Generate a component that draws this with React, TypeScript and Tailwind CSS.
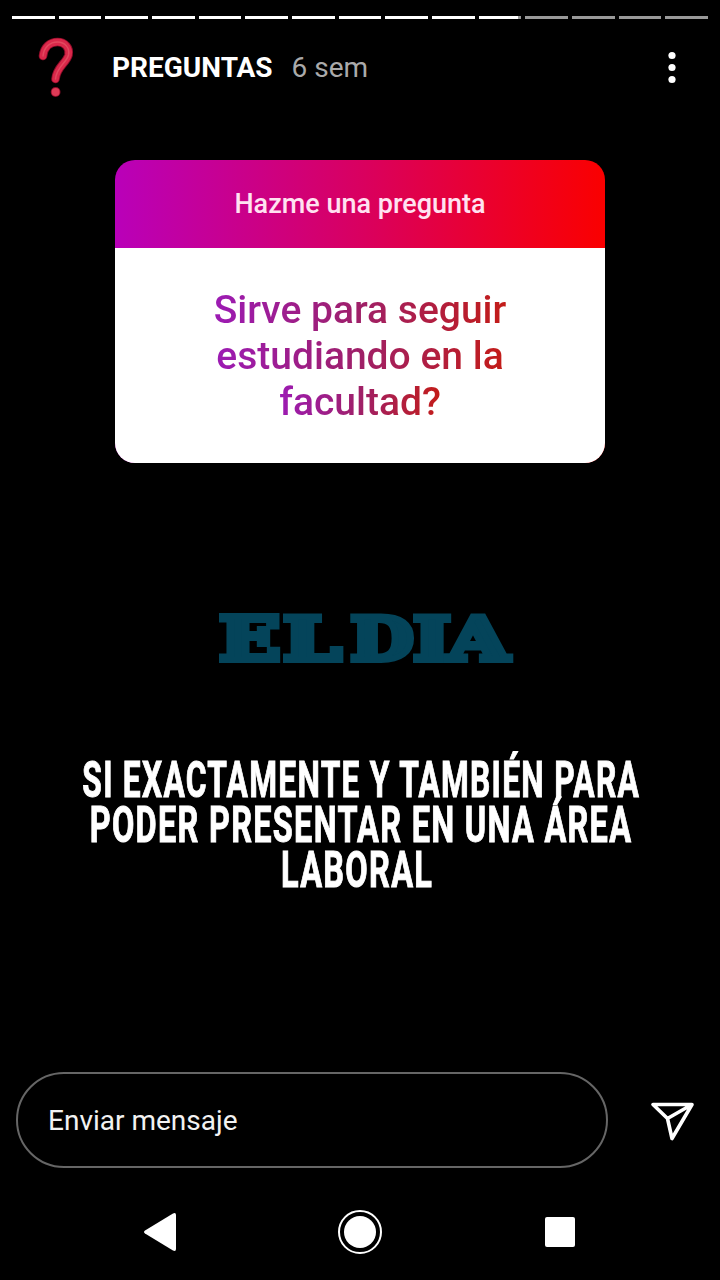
const SEGMENTS = ['full', 'full', 'full', 'full', 'full', 'full', 'full', 'full', 'full', 'full', 'current', 'empty', 'empty', 'empty', 'empty'];

function ProgressBar() {
  return (
    <div className="flex h-[3px] gap-1 px-3 mt-4">
      {SEGMENTS.map((state, i) => (
        <div key={i} className="h-full flex-1 bg-[#999999]">
          {state !== 'empty' && (
            <div className={state === 'full' ? 'h-full w-full bg-white' : 'h-full w-[91%] bg-white'} />
          )}
        </div>
      ))}
    </div>
  );
}

function QuestionMark() {
  return (
    <svg className="h-[75px] w-[60px]" viewBox="0 0 60 75" fill="none">
      <path d="M18 26C19 17 25 12 32.500 12C40 12 45 18 43.500 25C41.500 33 31.500 37 30.500 49" stroke="#8f0c29" strokeWidth="8.600" strokeLinecap="round" />
      <path d="M18 26C19 17 25 12 32.500 12C40 12 45 18 43.500 25C41.500 33 31.500 37 30.500 49" stroke="#d9284a" strokeWidth="6.800" strokeLinecap="round" />
      <path d="M18 26C19 17 25 12 32.500 12C40 12 45 18 43.500 25C41.500 33 31.500 37 30.500 49" stroke="#e2495f" strokeWidth="1.500" strokeLinecap="round" />
      <circle cx="30.600" cy="62" r="4.900" fill="#8f0c29" />
      <circle cx="30.600" cy="62" r="4" fill="#de3b57" />
    </svg>
  );
}

function Header() {
  return (
    <header className="flex h-[75px] items-center mt-[11px] pl-[25px] pr-[40px]">
      <QuestionMark />
      <span className="ml-[27px] pt-px text-[28px] font-bold text-white">PREGUNTAS</span>
      <span className="ml-[19px] pt-px text-[28px] text-[#aaaaaa]">6 sem</span>
      <svg className="ml-auto h-9 w-4" viewBox="0 0 16 36" fill="white">
        <circle cx="8" cy="5.500" r="3.600" />
        <circle cx="8" cy="17.500" r="3.600" />
        <circle cx="8" cy="29.500" r="3.600" />
      </svg>
    </header>
  );
}

function QuestionCard() {
  return (
    <section className="mx-auto mt-[55px] flex h-[303px] w-[490px] flex-col overflow-hidden rounded-[20px] bg-linear-to-r/srgb from-[#b900b9] via-[#d90060] to-[#fa0000]">
      <div className="flex h-[88px] items-center justify-center text-[27px] font-medium text-[#ffe2f1]">
        Hazme una pregunta
      </div>
      <div className="flex flex-1 flex-col items-center bg-white pt-[39px] text-[39px] leading-[46px] font-medium text-transparent">
        <span className="bg-linear-to-r/srgb from-[#9c1bb4] via-[#9f2068] to-[#c31c18] bg-clip-text">Sirve para seguir</span>
        <span className="bg-linear-to-r/srgb from-[#9c1bb4] via-[#9f2068] to-[#c31c18] bg-clip-text">estudiando en la</span>
        <span className="bg-linear-to-r/srgb from-[#9c1bb4] via-[#9f2068] to-[#c31c18] bg-clip-text">facultad?</span>
      </div>
    </section>
  );
}

function Brand() {
  return (
    <div className="ml-[219px] mt-[151px] flex h-[50px] w-[294px] items-center font-['DejaVu_Serif'] text-[60px] leading-[50px] font-bold text-[#04445a] [-webkit-text-stroke:6px_#04445a]">
      <span className="flex w-[61px] shrink-0 justify-center"><span className="scale-x-[1.335]">E</span></span>
      <span className="ml-[2px] flex w-[61px] shrink-0 justify-center"><span className="scale-x-[1.370]">L</span></span>
      <span className="ml-[7px] flex w-[64px] shrink-0 justify-center"><span className="scale-x-[1.210]">D</span></span>
      <span className="-ml-px flex w-[39px] shrink-0 justify-center"><span className="scale-x-[1.340]">I</span></span>
      <span className="-ml-[7px] flex w-[67px] shrink-0 justify-center"><span className="scale-x-[1.300]">A</span></span>
    </div>
  );
}

function Answer() {
  return (
    <div className="mt-[94px] flex flex-col items-center pl-[2px] text-[50px] leading-[45px] font-bold tracking-[2px] whitespace-nowrap text-white [-webkit-text-stroke:1px_white]">
      <span className="scale-x-[0.635]">SI EXACTAMENTE Y TAMBIÉN PARA</span>
      <span className="scale-x-[0.649]">PODER PRESENTAR EN UNA ÁREA</span>
      <span className="-ml-[8px] scale-x-[0.650]">LABORAL</span>
    </div>
  );
}

function MessageBar() {
  return (
    <div className="mt-[179px] flex items-center pl-4">
      <div className="flex h-24 w-[592px] items-center rounded-full border-2 border-[#666666] pt-px pl-[30px] text-[28px] text-[#f2f2f2]">
        Enviar mensaje
      </div>
      <svg className="ml-[40px] h-11 w-[50px]" viewBox="0 0 50 44" fill="none" stroke="white" strokeWidth="3.600" strokeLinejoin="round">
        <path d="M5 6.500H44L24 40.500L19.500 20.500Z M19.500 20.500L44 6.500" />
      </svg>
    </div>
  );
}

function NavigationBar() {
  return (
    <nav className="mt-[37px] flex h-[54px] items-center">
      <svg className="ml-[144px] h-[40px] w-8" viewBox="0 0 32 40" fill="white">
        <path d="M1 18.500L29 1.500Q32 .200 32 3V37Q32 39.800 29 38.500L1 21.500Q-1 20 1 18.500Z" />
      </svg>
      <div className="ml-[162px] flex size-11 items-center justify-center rounded-full border-2 border-white">
        <div className="size-8 rounded-full bg-white" />
      </div>
      <div className="ml-[163px] size-[30px] rounded-[2px] bg-white" />
    </nav>
  );
}

export default function App() {
  return (
    <main className="flex h-[1280px] w-[720px] flex-col overflow-hidden bg-black font-[Roboto,sans-serif]">
      <ProgressBar />
      <Header />
      <QuestionCard />
      <Brand />
      <Answer />
      <MessageBar />
      <NavigationBar />
    </main>
  );
}
